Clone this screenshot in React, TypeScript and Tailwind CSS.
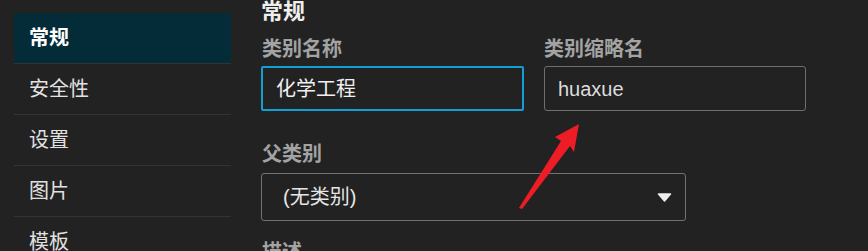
import React from "react";

const cjk = { fontFamily: '"Liberation Sans", "Noto Sans CJK SC", sans-serif' };

function NavItem({ label, active }: { label: string; active?: boolean }) {
  return (
    <div
      className={`shrink-0 h-[51px] border-b border-[#333333] flex items-center pl-[15px] text-[20px] ${
        active ? "bg-[#032b38] font-bold text-white" : "text-[#e2e2e2]"
      }`}
    >
      {label}
    </div>
  );
}

export default function App() {
  return (
    <div
      className="relative w-[868px] h-[251px] overflow-hidden bg-[#222222] flex items-start"
      style={cjk}
    >
      <div className="ml-[14px] mt-[13px] w-[217px] shrink-0 flex flex-col">
        <NavItem label="常规" active />
        <NavItem label="安全性" />
        <NavItem label="设置" />
        <NavItem label="图片" />
        <NavItem label="模板" />
      </div>
      <div className="ml-[30px] flex flex-col shrink-0">
        <div className="shrink-0 text-[22px] leading-[24px] font-bold text-[#eeeeee]">常规</div>
        <div className="shrink-0 mt-[12px] flex gap-[20px]">
          <div className="w-[263px] flex flex-col">
            <div className="shrink-0 text-[20px] leading-[26px] font-bold text-[#a3a3a3] pl-px">类别名称</div>
            <div className="shrink-0 mt-[4px] h-[45px] border-2 border-[#129fd6] rounded-[2px] flex items-center pl-[13px] text-[20px] text-[#f0f0f0]">
              化学工程
            </div>
          </div>
          <div className="w-[262px] flex flex-col">
            <div className="shrink-0 text-[20px] leading-[26px] font-bold text-[#a3a3a3]">类别缩略名</div>
            <div className="shrink-0 mt-[4px] h-[45px] border border-[#6e6e6e] rounded-[3px] flex items-center pl-[13px] text-[20px] text-[#dddddd]">
              huaxue
            </div>
          </div>
        </div>
        <div className="shrink-0 mt-[30px] text-[20px] leading-[26px] font-bold text-[#a3a3a3] pl-px">父类别</div>
        <div className="shrink-0 mt-[6px] w-[425px] h-[48px] border border-[#727272] rounded-[3px] flex items-center justify-between pl-[21px] pr-[13px] text-[20px] text-[#e6e6e6]">
          <span>(无类别)</span>
          <svg width="15" height="9" viewBox="0 0 15 9">
            <path d="M1.5 1 L13.5 1 L7.5 8 Z" fill="#eeeeee" stroke="#eeeeee" strokeWidth="1.5" strokeLinejoin="round" />
          </svg>
        </div>
        <div className="shrink-0 mt-[18px] text-[20px] leading-[26px] font-bold text-[#a3a3a3] pl-px">描述</div>
      </div>
      <svg className="absolute left-0 top-0 pointer-events-none" width="868" height="251">
        <polygon
          points="519,208 561,141 555,137 579,124 574,152 570,146 522,209"
          fill="#ee1c25"
        />
      </svg>
    </div>
  );
}
